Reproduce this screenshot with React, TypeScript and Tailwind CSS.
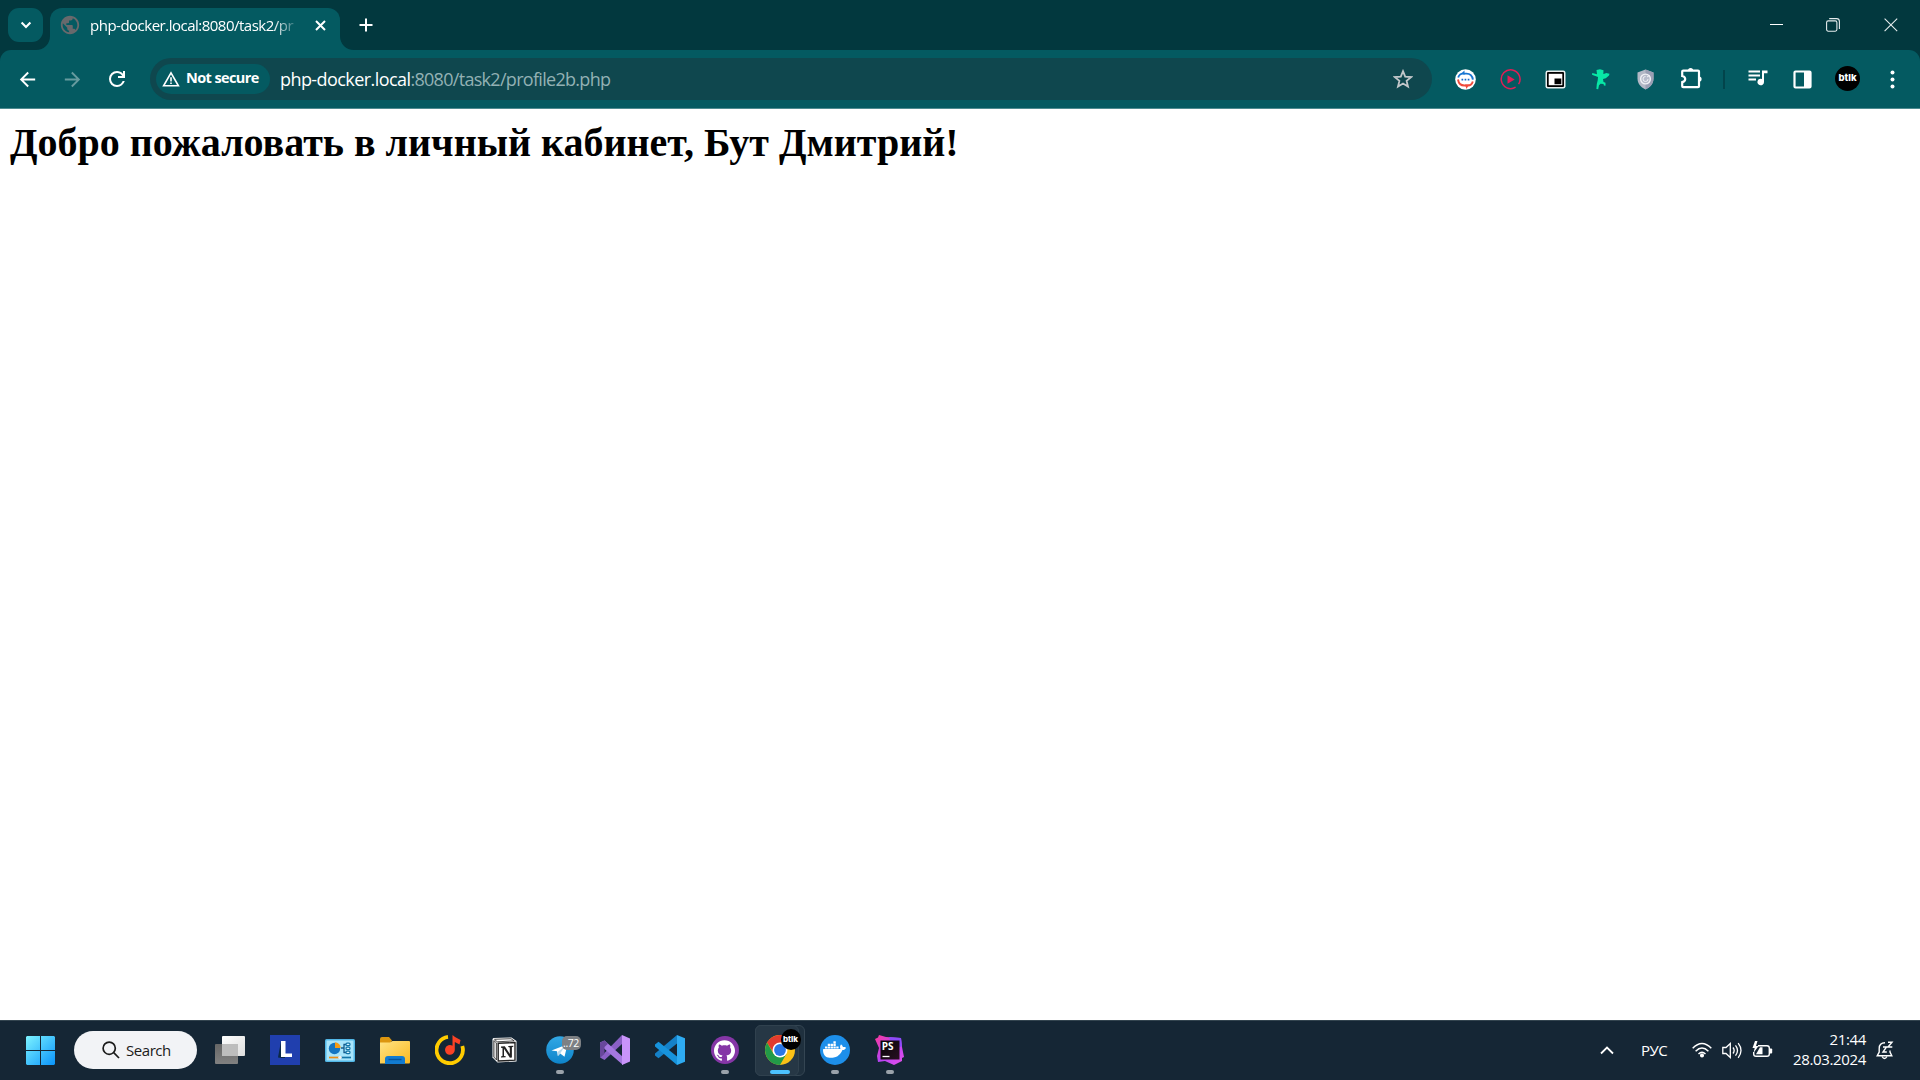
import type { ReactNode } from 'react';
import { MdArrowBack, MdArrowForward, MdPublic } from 'react-icons/md';
import { SiDocker, SiGithub } from 'react-icons/si';

const ui = "font-['Open_Sans','Noto_Sans',sans-serif]";

function Slot({ children }: { children: ReactNode }) {
  return <div className="flex h-full w-[45px] shrink-0 items-center justify-center">{children}</div>;
}

function Task({ children, running = false }: { children: ReactNode; running?: boolean }) {
  return (
    <div className="relative flex h-full w-[55px] shrink-0 items-center justify-center pb-px">
      {children}
      {running && <span className="absolute bottom-[6px] left-[24px] h-[4px] w-[8px] rounded-full bg-[#9aa2aa]" />}
    </div>
  );
}

function TabStrip() {
  return (
    <div className="flex h-[50px] bg-[#02383e]">
      <button className="ml-2 mt-2 flex h-[34px] w-[35px] items-center justify-center rounded-[11px] bg-[#045a61]">
        <svg width="12" height="8" viewBox="0 0 12 8" fill="none" stroke="#fff" strokeWidth="2.1">
          <path d="M1.6 1.5 6 5.9l4.4-4.4" />
        </svg>
      </button>
      <div className="relative ml-[7px] mt-2 flex h-[42px] w-[290px] items-start rounded-t-[12px] bg-[#045a61]">
        <svg className="absolute bottom-0 left-[-14px]" width="14" height="14" viewBox="0 0 14 14">
          <path d="M14 0v14H0C8 14 14 8 14 0z" fill="#045a61" />
        </svg>
        <svg className="absolute bottom-0 right-[-14px]" width="14" height="14" viewBox="0 0 14 14">
          <path d="M0 0v14h14C6 14 0 8 0 0z" fill="#045a61" />
        </svg>
        <MdPublic className="ml-[9px] mt-[6px] shrink-0 text-[#68696c]" size={22} />
        <div className="ml-[9px] mt-[6px] w-[213px] whitespace-nowrap text-[15px] leading-[22px] tracking-[-0.5px] text-white [mask-image:linear-gradient(to_right,black_183px,transparent_210px)]">
          php-docker.local:8080/task2/pr
        </div>
        <svg className="ml-[12px] mt-[12px] shrink-0" width="11" height="11" viewBox="0 0 11 11" stroke="#fff" strokeWidth="2">
          <path d="M1 1l9 9M10 1l-9 9" />
        </svg>
      </div>
      <svg className="ml-[19px] mt-[18px]" width="14" height="14" viewBox="0 0 14 14" stroke="#fff" strokeWidth="2">
        <path d="M7 .5v13M.5 7h13" />
      </svg>
      <div className="ml-auto flex h-[50px] items-start pr-[22px] pt-[18px]">
        <svg width="13" height="13" viewBox="0 0 13 13" stroke="#fff"><path d="M0 6.5h13" /></svg>
        <svg className="ml-[43px]" width="14" height="14" viewBox="0 0 14 14" fill="none" stroke="#e5eced" strokeWidth="1.1">
          <rect x=".6" y="2.9" width="10.3" height="10.3" rx="1.6" />
          <path d="M3.2.6h7.4a2.8 2.8 0 0 1 2.8 2.8V11" />
        </svg>
        <svg className="ml-[44px]" width="14" height="14" viewBox="0 0 14 14" stroke="#e5eced" strokeWidth="1.1">
          <path d="M.6.6l12.6 12.6M13.2.6.6 13.2" />
        </svg>
      </div>
    </div>
  );
}

function Toolbar() {
  return (
    <div className="bg-[#02383e]">
      <div className="flex h-[58px] items-center rounded-t-[11px] bg-[#045a61] pl-[5px] text-white">
        <Slot><MdArrowBack size={23} /></Slot>
        <Slot><MdArrowForward size={23} className="text-[#679b9f]" /></Slot>
        <Slot>
          <svg className="mr-px" width="24" height="24" viewBox="0 0 24 24" fill="currentColor">
            <path d="M12 20q-3.35 0-5.675-2.325T4 12q0-3.35 2.325-5.675T12 4q1.725 0 3.3.713T18 6.75V4h2v7h-7V9h4.2q-.8-1.4-2.187-2.2T12 6Q9.5 6 7.75 7.75T6 12q0 2.5 1.75 4.25T12 18q1.925 0 3.475-1.1T17.65 14h2.1q-.7 2.65-2.85 4.325T12 20Z" />
          </svg>
        </Slot>
        <div className="ml-[10px] flex h-[42px] w-[1282px] items-center rounded-full bg-[#0f474e] pl-[6px]">
          <div className="flex h-[30px] w-[114px] items-center rounded-full bg-[#045a61] pl-[6px]">
            <svg width="18" height="16" viewBox="0 0 18 16" fill="none" stroke="#fff" strokeWidth="1.6">
              <path d="M9 1.8 16.4 14.8H1.6z" />
              <path d="M9 6.2v4.2M9 11.4v1.7" />
            </svg>
            <span className="ml-[6px] whitespace-nowrap pb-[2px] text-[14.5px] font-bold leading-5 tracking-[-0.6px]">Not secure</span>
          </div>
          <div className="ml-[10px] whitespace-nowrap text-[18px] leading-6 tracking-[-0.7px] text-[#93b1b4]">
            <span className="tracking-[-0.57px] text-white">php-docker.local</span>:8080/task2/profile2b.php
          </div>
          <svg className="ml-auto mr-[19px]" width="20" height="20" viewBox="0 0 20 20" fill="none" stroke="#c2c7ca" strokeWidth="1.8">
            <path d="M10 2.2l2.2 5.4 5.9.5-4.5 3.8 1.4 5.7-5-3.1-5 3.1 1.4-5.7L1.9 8.1l5.9-.5z" />
          </svg>
        </div>
        <div className="ml-[11px] flex h-full items-center">
          <Slot>
            <svg width="21" height="21" viewBox="0 0 21 21" fill="none">
              <circle cx="10.5" cy="10.5" r="10.3" fill="#fff" />
              <path d="M3.2 8.6C4 5.8 5.8 4.6 8 4.6h3.5c3.400 0 5.800 2 6.400 6" stroke="#1976d2" strokeWidth="1.9" />
              <path d="M9.500 1.500v4.500L6.500 4.300z" fill="#1976d2" />
              <path d="M3 10.500c.6 4 3 6 6.400 6H13c2.200 0 4-1.200 4.800-4" stroke="#f04a3a" strokeWidth="1.900" />
              <path d="M10 15.500h4L11.500 20z" fill="#f04a3a" />
              <path d="M6.500 9.700H8.200v1.700H6.500zM9.600 9.700h1.700v1.700H9.600zM12.700 9.700h1.700v1.700h-1.700z" fill="#1668c9" />
            </svg>
          </Slot>
          <Slot>
            <svg width="21" height="21" viewBox="0 0 21 21" fill="none">
              <path d="M15.6 18.2A9.400 9.400 0 1 1 18.600 15.200" stroke="#e11d55" strokeWidth="1.5" />
              <path d="M7.500 6.200v8.600l7.200-4.300z" fill="#e11d55" />
            </svg>
          </Slot>
          <Slot>
            <svg width="21" height="19" viewBox="0 0 21 19">
              <rect x=".5" y=".5" width="20" height="18" rx="2.2" fill="#e9efef" />
              <rect x="2" y="2" width="17" height="15" rx="1" fill="#000" />
              <rect x="3.700" y="3.800" width="13.600" height="11.400" fill="#fff" />
              <rect x="9.500" y="8.500" width="6.800" height="5.700" fill="#000" />
            </svg>
          </Slot>
          <Slot>
            <svg width="18" height="21" viewBox="0 0 18 21" fill="#08e8a6">
              <path d="M4.500 1 8 .3l3.500 1L11.300 5l2-.5L14 4l3.500.8-.5 1.700-3.200 2.800-2.800.7.500 3 2 .8v3l-1.600-.3-.4-1.500-3-.2-1.500 1.500-.8 4-1.800-.4.4-5 .9-3.600.3-3.200L0 5.800l.3-1.700L5 5.300z" />
            </svg>
          </Slot>
          <Slot>
            <svg width="17" height="21" viewBox="0 0 17 21" fill="none">
              <path d="M8.5.5l8 3v6c0 5-3 8.500-8 11-5-2.500-8-6-8-11v-6z" fill="#b3b8c6" />
              <path d="M8.500.5l8 3v6c0 5-3 8.500-8 11z" fill="#9a9fb4" />
              <circle cx="8.500" cy="10" r="4.900" stroke="#f0f1f5" strokeWidth="1.400" fill="#b7bccb" />
              <path d="M8.500 7.500a2.500 2.500 0 1 0 2.500 2.500M10 8l2.500-1.500" stroke="#f0f1f5" />
            </svg>
          </Slot>
          <Slot>
            <svg className="mt-[-3px]" width="22" height="22" viewBox="0 0 22 22">
              <path d="M2.200 9V4.600q0-1 1-1H18q1 0 1 1V19.200q0 1-1 1H3.200q-1 0-1-1V15.200q3-.6 3-3.100T2.200 9z" fill="none" stroke="#fff" strokeWidth="2.200" />
              <path d="M8 3.500a2.600 2.600 0 0 1 5.200 0zM19 9.500a2.600 2.600 0 0 1 0 5.200z" fill="#fff" />
            </svg>
          </Slot>
          <div className="mx-[10px] h-[19px] w-[2px] bg-[#02444b]" />
          <Slot>
            <svg className="mt-[-2px]" width="20" height="16" viewBox="0 0 20 16">
              <path d="M.5 1.500H12M.5 5.500H12M.5 9.500H8" fill="none" stroke="#fff" strokeWidth="2" />
              <path d="M14 .5h5.500v2.700H16v8.800a3.300 3.300 0 1 1-2-3z" fill="#fff" />
            </svg>
          </Slot>
          <Slot>
            <svg width="19" height="19" viewBox="0 0 19 19">
              <rect x="1.500" y="1.500" width="16" height="16" rx="1" fill="none" stroke="#fff" strokeWidth="2.200" />
              <path d="M11 1h7v17h-7z" fill="#fff" />
            </svg>
          </Slot>
          <Slot>
            <div className="mb-px flex h-[25px] w-[25px] items-center justify-center rounded-full bg-black pb-px font-[Inter,sans-serif] text-[9.5px] font-extrabold leading-none text-white">btlk</div>
          </Slot>
          <Slot>
            <svg width="5" height="19" viewBox="0 0 5 19" fill="#fff">
              <circle cx="2.500" cy="2.500" r="2" /><circle cx="2.500" cy="9.500" r="2" /><circle cx="2.500" cy="16.500" r="2" />
            </svg>
          </Slot>
        </div>
      </div>
      <div className="h-px bg-[#4d8b90]" />
    </div>
  );
}

function ChromeLogo() {
  return (
    <svg width="30" height="30" viewBox="0 0 30 30">
      <circle cx="15" cy="15" r="15" fill="#fbc116" />
      <path d="M2.010 7.500A15 15 0 0 1 27.990 7.500H15L9 18.500z" fill="#e33b2e" />
      <path d="M2.010 7.500A15 15 0 0 0 15 30L21.500 18.750 15 22 8.500 18.750z" fill="#229a48" />
      <circle cx="15" cy="15" r="7.500" fill="#fff" />
      <circle cx="15" cy="15" r="5.900" fill="#2b77e5" />
    </svg>
  );
}

function Taskbar() {
  return (
    <div className="flex h-[60px] border-t border-[#33444f] bg-[#152635] text-white">
      <div className="flex h-full w-[74px] items-center pl-[26px]">
        <svg width="29" height="29" viewBox="0 0 29 29">
          <defs>
            <linearGradient id="win" x1="0" y1="0" x2="1" y2="1"><stop stopColor="#7df3ff" /><stop offset="1" stopColor="#0a94fb" /></linearGradient>
          </defs>
          <path d="M1 0h13v14H0V1zM15 0h13l1 1v13H15zM0 15h14v14H1l-1-1zM15 15h14v13l-1 1H15z" fill="url(#win)" />
        </svg>
      </div>
      <div className="mt-[10px] flex h-[38px] w-[123px] items-center rounded-full bg-[#f2f3f6] pl-[28px] text-[#1b1b1b]">
        <svg width="18" height="18" viewBox="0 0 18 18" fill="none" stroke="#1b1b1b" strokeWidth="1.7">
          <circle cx="7.200" cy="7.200" r="6.100" /><path d="M11.700 11.700l5.300 5.300" />
        </svg>
        <span className="ml-[6px] text-[15px] leading-5 tracking-[-0.45px]">Search</span>
      </div>
      <div className="ml-[5px] flex h-full">
        <Task>
          <svg width="30" height="28" viewBox="0 0 30 28">
            <defs>
              <linearGradient id="tv" x2="1" y2="1"><stop stopColor="#fff" /><stop offset="1" stopColor="#ddd" /></linearGradient>
              <linearGradient id="tg" x2="0" y2="1"><stop stopColor="#666" /><stop offset="1" stopColor="#818181" /></linearGradient>
            </defs>
            <rect y="8" width="23" height="20" rx="1" fill="url(#tg)" />
            <rect x="7" width="23" height="20" rx="1" fill="url(#tv)" />
            <path d="M7 8h16v12H7z" fill="#bdbdbd" />
          </svg>
        </Task>
        <Task>
          <svg width="30" height="30" viewBox="0 0 30 30">
            <path d="M0 0h30v30H0z" fill="#203fae" />
            <path d="M11 6 8 22.500l3 .5h4V12z" fill="#0b2947" />
            <path d="M11 6h4.500v12.500H22V22H11z" fill="#fff" />
          </svg>
        </Task>
        <Task>
          <svg width="30" height="23" viewBox="0 0 30 23">
            <rect width="30" height="23" rx="1.500" fill="#52b7e7" />
            <path d="M1.500 1.500h27v20h-27z" fill="#a9e5fb" />
            <circle cx="9.500" cy="9.500" r="5.700" fill="#1475c2" />
            <path d="M10 9V3.300A5.700 5.700 0 0 1 15.700 9z" fill="#f49b16" />
            <path d="M16 9h3V5.500h3M19 9v4.500h3" stroke="#145b8c" fill="none" strokeWidth="1.300" />
            <g fill="#d7f3fd" stroke="#1475a8" strokeWidth="1.200">
              <rect x="21" y="4.200" width="4" height="2.400" rx="1" /><rect x="21" y="8.200" width="4" height="2.400" rx="1" /><rect x="21" y="12.200" width="4" height="2.400" rx="1" />
            </g>
            <path d="M4 18.500h11" stroke="#ed8d16" strokeWidth="1.700" /><path d="M15 18.500h11" stroke="#1475a8" strokeWidth="1.700" />
            <circle cx="15" cy="18.500" r="1.800" fill="#eee" />
          </svg>
        </Task>
        <Task>
          <svg width="30" height="27" viewBox="0 0 30 27">
            <defs><linearGradient id="fo" x2="1" y2="1"><stop stopColor="#ffe384" /><stop offset="1" stopColor="#fbb921" /></linearGradient></defs>
            <path d="M0 2q0-2 2-2h7l3 3.500L10 7H0z" fill="#dc9610" />
            <path d="M0 5.500h10L12.500 4H29q1 0 1 1v20q0 1.500-1 1.500H0z" fill="url(#fo)" />
            <path d="M5 27v-5q0-3 3-3h14q3 0 3 3v5z" fill="#127bd0" /><path d="M8.500 22.500h13" stroke="#07549c" strokeWidth="1.400" />
          </svg>
        </Task>
        <Task>
          <svg width="30" height="30" viewBox="0 0 30 30">
            <path d="M13 1.900A13.200 13.200 0 1 0 27.300 11" fill="none" stroke="#fc0" strokeWidth="3.800" />
            <path d="M17.500 0l2.500 2 5.500 3-1 4.500-4.700-2.500V15a4.900 4.900 0 1 1-2.300-4.300z" fill="#fc4225" />
          </svg>
        </Task>
        <Task>
          <svg width="25" height="26" viewBox="0 0 25 26">
            <path d="M1.500.9 19.500.5l5 3.500v20.500L5.500 25.500.5 20.500V2z" fill="#fff" />
            <path d="M2.500 2.300 19 1.700l3.200 2.200-17 .9z" fill="#fff" stroke="#222" strokeWidth=".8" />
            <path d="M1.800 3.500 4.600 6v17L1.800 20z" fill="#ddd" stroke="#222" strokeWidth=".8" />
            <path d="M6.200 6.300l16.800-.8v17.700L6.200 24z" fill="#fff" stroke="#222" strokeWidth="1.400" />
            <path d="M9 9.500l3.800-.3 5 7.800v-6.600l-1.500-.4V9l5-.3v1l-1.400.6v10.200l-2 .2-5.900-9v7.200l1.700.4v1l-4.700.2v-1l1.500-.6V11L9 10.700z" fill="#222" />
          </svg>
        </Task>
        <Task running>
          <div className="relative">
            <svg width="28" height="28" viewBox="0 0 28 28">
              <defs><linearGradient id="te" x2="0" y2="1"><stop stopColor="#32a8e5" /><stop offset="1" stopColor="#0e84ca" /></linearGradient></defs>
              <circle cx="14" cy="14" r="13.800" fill="url(#te)" />
              <path d="M5.500 14.500 21.500 8.200 18.500 20.800l-4.300-3.200-2.300 2.300-.9-4.600L5.500 14.500z" fill="#fff" /><path d="M11.900 19.900l-.3-4 7.500-6-5 7.700z" fill="#b8d9ec" />
            </svg>
            <span className="absolute left-[16px] top-0 flex h-[14px] w-[19px] items-center justify-center rounded-[5px] bg-[#7d8084] text-[10.5px] leading-none tracking-[-0.4px]">..72</span>
          </div>
        </Task>
        <Task>
          <svg width="30" height="30" viewBox="0 0 30 30">
            <path d="M0 22.500 22 0v9L4.500 25z" fill="#8a60c5" />
            <path d="M0 7.500 4.500 5.500 23 22v8L0 10z" fill="#a578e0" />
            <path d="M0 7.500v15L4.500 19v-8z" fill="#68479b" />
            <path d="M0 7.500 4.500 5.500 8 8.700 4.500 12z" fill="#68479b" />
            <path d="M22 0l8 3.500v23L22 30z" fill="#c994fa" />
          </svg>
        </Task>
        <Task>
          <svg width="30" height="30" viewBox="0 0 30 30">
            <path d="M22 0v8.500L3.500 23.200 0 20.500v-2z" fill="#1581c8" />
            <path d="M0 9.500l3.500-2.700L22 21.500V30L0 11.500z" fill="#1793dc" />
            <path d="M22 0l8 3.300v23.400L22 30z" fill="#2eabf2" />
          </svg>
        </Task>
        <Task running>
          <div className="flex h-[28px] w-[28px] items-center justify-center rounded-full bg-[#8536a6]"><SiGithub size={21} /></div>
        </Task>
        <Task>
          <div className="absolute left-[3px] top-[4px] h-[51px] w-[50px] rounded-[6px] border border-[#344552] bg-[#1f303e]" />
          <div className="absolute left-[3px] top-[4px] h-[51px] w-[44px] rounded-[6px] border border-[#30414e] bg-[#263745]" />
          <div className="relative">
            <ChromeLogo />
            <span className="absolute left-[16px] top-[-6px] flex h-[21px] w-[20px] items-center justify-center rounded-full bg-black pb-px font-[Inter,sans-serif] text-[8px] font-extrabold leading-none">btlk</span>
          </div>
          <span className="absolute bottom-[6px] left-[18px] h-[4px] w-[20px] rounded-full bg-[#4cc2ff]" />
        </Task>
        <Task running>
          <div className="flex h-[30px] w-[30px] items-center justify-center rounded-full bg-[#1d8fea] pb-px"><SiDocker size={23} /></div>
        </Task>
        <Task running>
          <svg width="30" height="30" viewBox="0 0 30 30">
            <defs>
              <linearGradient id="ps" x2="1" y2="1"><stop stopColor="#ff3898" /><stop offset=".5" stopColor="#b744f5" /><stop offset="1" stopColor="#e64fe8" /></linearGradient>
              <linearGradient id="pk" x2="1" y2="1"><stop stopColor="#060507" /><stop offset="1" stopColor="#281023" /></linearGradient>
            </defs>
            <path d="M0 4 3 2.500 4 0l7 2 15 1 1 9 2 10-2 1v3l-8 4-9-4-7 1-1-6 2-8z" fill="url(#ps)" />
            <path d="M14 2l12 1 1 8-8 4z" fill="#8b4bfa" />
            <path d="M5.500 5.500h19v19h-19z" fill="url(#pk)" /><path d="M7.500 21.500h7" stroke="#fff" strokeWidth="1.300" />
            <text x="6.700" y="15.300" fill="#fff" className="font-['Open_Sans',sans-serif] text-[10px] font-bold">PS</text>
          </svg>
        </Task>
      </div>
      <div className="ml-auto flex h-full items-center pb-px pr-[25px]">
        <svg width="14" height="9" viewBox="0 0 14 9" fill="none" stroke="#fff" strokeWidth="1.800"><path d="M1 7.500 7 1.500l6 6" /></svg>
        <span className="ml-[27px] w-[27px] whitespace-nowrap text-[15px] tracking-[-0.5px]">РУС</span>
        <svg className="ml-[24px]" width="20" height="16" viewBox="0 0 20 16" fill="none" stroke="#fff" strokeWidth="1.500">
          <path d="M.7 6.300Q10-3.200 19.300 6.300M3.600 9.200q6.400-6.300 12.800 0M6.500 12q3.500-3.200 7 0" /><circle cx="10" cy="13.500" r="1.300" fill="#fff" />
        </svg>
        <svg className="ml-[10px]" width="21" height="17" viewBox="0 0 21 17" fill="none" stroke="#fff" strokeWidth="1.300">
          <path d="M.8 5.500H4L8.300 1.500v14L4 11.500H.8z" /><path d="M11 5.500q2.300 3 0 6M13.500 3.300q4 5.200 0 10.400M16.200 1.200q5.600 7.300 0 14.600" />
        </svg>
        <svg className="ml-[9px] mt-[-2px]" width="21" height="17" viewBox="0 0 21 17">
          <path d="M6 4.700h9q2.300 0 2.300 2.300v6q0 2.300-2.300 2.300H4Q1.700 15.300 1.700 13v-2" fill="none" stroke="#fff" strokeWidth="1.400" />
          <path d="M18 7.500h1.200q1 0 1 1v3q0 1-1 1H18z" fill="#fff" />
          <path d="M4 13.300l4-7h2.500v7z" fill="#fff" /><path d="M3 0 .5 7h2.200L1.500 12 6.500 5H4L5.500 0z" fill="#fff" />
        </svg>
        <div className="ml-[20px] w-[73px] whitespace-nowrap pb-[3px] text-right text-[15px] leading-[20px] tracking-[-0.36px]">
          <div>21:44</div>
          <div className="ml-[-4px]">28.03.2024</div>
        </div>
        <svg className="ml-[10px]" width="19" height="19" viewBox="0 0 19 19" fill="none" stroke="#fff" strokeWidth="1.400">
          <path d="M9 1.700C5.300 1.700 3.200 4.200 3.200 7.500V11L1.200 14.800h14.600L14 11V9.500" /><path d="M6 15.500q2.500 4 5 0" />
          <path d="M7 6h3.500L7 11h3.800M12 1.200h4L12 6h4.300" />
        </svg>
      </div>
    </div>
  );
}

export default function App() {
  return (
    <div className={`flex h-[1080px] w-[1920px] flex-col overflow-hidden bg-white ${ui}`}>
      <TabStrip />
      <Toolbar />
      <main className="flex-1 px-[10px] pt-[11px]">
        <h1 className="whitespace-nowrap font-['Liberation_Serif','Times_New_Roman',serif] text-[40px] font-bold leading-[46px] text-black">
          Добро пожаловать в личный кабинет, Бут Дмитрий!
        </h1>
      </main>
      <Taskbar />
    </div>
  );
}
